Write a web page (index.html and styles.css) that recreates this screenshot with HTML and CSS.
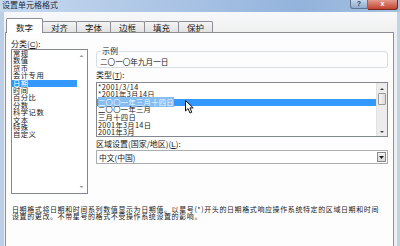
FILE: index.html
```html
<!DOCTYPE html>
<html lang="zh-CN">
  <head>
    <meta charset="UTF-8" />
    <meta name="viewport" content="width=device-width, initial-scale=1.0" />
    <title>设置单元格格式</title>
    <link rel="stylesheet" href="styles.css">
  </head>
  <body>
    <div class="window">
      <div class="titlebar">
        <span class="title">设置单元格格式</span>
        <div class="caption-btns">
          <span class="btn-help">?</span>
          <span class="btn-close">x</span>
        </div>
      </div>

      <div class="client">
        <div class="tabs">
          <span class="tab active">数字</span>
          <span class="tab">对齐</span>
          <span class="tab">字体</span>
          <span class="tab">边框</span>
          <span class="tab">填充</span>
          <span class="tab">保护</span>
        </div>

        <div class="panel">
          <div class="columns">
            <div class="col-left">
              <div class="label">分类(<u>C</u>):</div>
              <div class="listbox category">
                <ul class="items">
                  <li>常规</li>
                  <li>数值</li>
                  <li>货币</li>
                  <li>会计专用</li>
                  <li class="selected">日期</li>
                  <li>时间</li>
                  <li>百分比</li>
                  <li>分数</li>
                  <li>科学记数</li>
                  <li>文本</li>
                  <li>特殊</li>
                  <li>自定义</li>
                </ul>
                <div class="vscroll plain">
                  <svg class="arrow" width="9" height="8" viewBox="0 0 9 8"><polygon points="2.5,5 4.5,3 6.5,5" fill="#9a9a9a"/></svg>
                  <svg class="arrow" width="9" height="8" viewBox="0 0 9 8"><polygon points="2.5,3 4.5,5 6.5,3" fill="#9a9a9a"/></svg>
                </div>
              </div>
            </div>

            <div class="col-right">
              <fieldset class="sample">
                <legend>示例</legend>
                <div class="sample-text">二〇一〇年九月一日</div>
              </fieldset>

              <div class="label gap">类型(<u>T</u>):</div>
              <div class="listbox types">
                <ul class="items">
                  <li>*2001/3/14</li>
                  <li>*2001年3月14日</li>
                  <li class="selected"><span>二〇〇一年三月十四日</span></li>
                  <li>二〇〇一年三月</li>
                  <li>三月十四日</li>
                  <li>2001年3月14日</li>
                  <li>2001年3月</li>
                </ul>
                <div class="vscroll">
                  <svg class="arrow" width="10" height="7" viewBox="0 0 10 7"><polygon points="3,5 5,3 7,5" fill="#404040"/></svg>
                  <div class="thumb"></div>
                  <div class="track"></div>
                  <svg class="arrow" width="10" height="7" viewBox="0 0 10 7"><polygon points="3,3 5,5 7,3" fill="#404040"/></svg>
                </div>
              </div>

              <div class="label gap">区域设置(国家/地区)(<u>L</u>):</div>
              <div class="combo">
                <span>中文(中国)</span>
                <span class="drop">
                  <svg width="7" height="10" viewBox="0 0 7 10"><polygon points="1,4 6,4 3.5,7" fill="#222"/></svg>
                </span>
              </div>
            </div>
          </div>

          <p class="desc">日期格式将日期和时间系列数值显示为日期值。以星号(*)开头的日期格式响应操作系统特定的区域日期和时间<br>设置的更改。不带星号的格式不受操作系统设置的影响。</p>
        </div>
      </div>

      <svg class="cursor" width="10" height="15" viewBox="0 0 10 15">
        <path d="M0.5,0.5 L0.5,11 L3,8.6 L5,13 L6.8,12.2 L4.9,7.9 L8.2,7.9 Z" fill="#fff" stroke="#111" stroke-width="1"/>
      </svg>
    </div>
  </body>
</html>
```

FILE: styles.css
```css
body {
  margin: 0;
  width: 400px;
  height: 246px;
  overflow: hidden;
  font-family: "Noto Sans CJK SC", "Liberation Sans", sans-serif;
  color: #1a1a1a;
}

.window {
  position: relative;
  height: 246px;
  background: linear-gradient(90deg, #bccfe6, #cfdcec 40%, #c2d3e8);
  display: flex;
  flex-direction: column;
}

.titlebar {
  height: 12px;
  display: flex;
  align-items: flex-start;
  background: linear-gradient(90deg, #c7d9ef 0%, #a9c3e4 45%, #93b3dc 75%, #a7c0e0 100%);
}

.title {
  font-size: 8px;
  line-height: 10px;
  padding-left: 2px;
  color: #1e2a3a;
}

.caption-btns {
  margin-left: auto;
  margin-right: 2px;
  display: flex;
}

.btn-help,
.btn-close {
  height: 9px;
  font-size: 7px;
  line-height: 8px;
  text-align: center;
  color: #fff;
  font-weight: bold;
  font-family: "Liberation Sans", sans-serif;
  box-sizing: border-box;
}

.btn-help {
  width: 18px;
  background: linear-gradient(#c5d6ea, #8eaacd);
  border: 1px solid #5e7594;
  border-top: none;
  border-radius: 0 0 0 3px;
  color: #2c3e58;
}

.btn-close {
  width: 30px;
  height: 10px;
  background: linear-gradient(#e29a8c, #c4422e);
  border: 1px solid #6d2c22;
  border-top: none;
  border-left: none;
  border-radius: 0 0 3px 0;
}

.client {
  flex: 1;
  margin: 0 3px 0 4px;
  padding-top: 6px;
  background: linear-gradient(#f7f8fa, #f0f0f0 20px);
  display: flex;
  flex-direction: column;
}

.tabs {
  height: 14px;
  display: flex;
  align-items: flex-end;
  padding-left: 2px;
}

.tab {
  width: 35px;
  height: 11px;
  box-sizing: border-box;
  border: 1px solid #8c8f98;
  border-bottom: none;
  margin-right: -1px;
  background: linear-gradient(#f4f4f4, #e2e2e2);
  font-size: 8.5px;
  line-height: 11px;
  text-align: center;
  border-radius: 2px 2px 0 0;
}

.tab.active {
  position: relative;
  z-index: 1;
  width: 37px;
  height: 15px;
  margin-bottom: -1px;
  line-height: 16px;
  background: #fff;
}

.panel {
  flex: 1;
  margin: 0 3px 0 1px;
  border: 1px solid #8c8f98;
  border-bottom: none;
  background: #fdfdfd;
}

.columns {
  display: flex;
  gap: 8px;
  padding: 6px 0 0 5px;
}

.label {
  font-size: 8px;
  line-height: 9px;
  white-space: nowrap;
}

.label u {
  text-decoration: underline;
  font-family: "Liberation Sans", sans-serif;
}

.listbox {
  display: flex;
  border: 1px solid #828790;
  background: #fff;
  box-sizing: border-box;
}

.items {
  flex: 1;
  margin: 0;
  padding: 0;
  list-style: none;
  white-space: nowrap;
}

.category {
  width: 77px;
  height: 145px;
}

.category .items li {
  height: 7.4px;
  font-size: 7.3px;
  line-height: 7.4px;
  letter-spacing: 0.5px;
  padding-left: 1px;
}

.items li.selected {
  background: #3399ff;
  color: #fff;
}

.vscroll {
  width: 10px;
  display: flex;
  flex-direction: column;
  justify-content: space-between;
  background: #ececec;
  border-left: 1px solid #e2e2e2;
}

.vscroll.plain {
  background: #fff;
  border-left: none;
  padding: 2px 0;
}

.col-right {
  width: 292px;
  padding-top: 8px;
}

.sample {
  margin: 0;
  padding: 3px 3px 1px;
  border: 1px solid #d5dfe5;
  border-radius: 3px;
}

.sample legend {
  padding: 0 1px;
  margin-left: 1px;
  font-size: 8px;
  line-height: 8px;
}

.sample-text {
  font-size: 7.6px;
  line-height: 8px;
}

.label.gap {
  margin-top: 3px;
  line-height: 8px;
}

.types {
  margin-top: 2px;
  height: 55px;
}

.types .items {
  padding-top: 0.6px;
}

.types .items li {
  height: 7.6px;
  font-size: 7.3px;
  line-height: 7.6px;
  letter-spacing: 0.3px;
  padding-left: 1px;
}

.types .items li.selected span {
  background: #86bdf2;
  color: #f2f8ff;
}

.types .vscroll {
  width: 11px;
  justify-content: flex-start;
  padding: 2px 0 1px;
  box-sizing: border-box;
}

.thumb {
  margin: 1px 1px 0;
  height: 10px;
  border: 1px solid #9a9a9a;
  border-radius: 1px;
  background: linear-gradient(90deg, #f4f4f4, #dcdcdc);
}

.track {
  flex: 1;
}

.combo {
  margin-top: 1px;
  height: 14px;
  box-sizing: border-box;
  border: 1px solid #abadb3;
  background: #fff;
  display: flex;
  align-items: center;
  justify-content: space-between;
  padding-left: 2px;
  font-size: 7.8px;
}

.drop {
  width: 9px;
  height: 10px;
  margin-right: 1px;
  box-sizing: border-box;
  border: 1px solid #8a8a8a;
  background: linear-gradient(#f3f3f3, #d8d8d8);
  display: flex;
  align-items: center;
  justify-content: center;
}

.desc {
  margin: 12px 0 0 6px;
  font-size: 7px;
  line-height: 7.2px;
  letter-spacing: 0.6px;
  white-space: nowrap;
}

.cursor {
  position: absolute;
  left: 185px;
  top: 100px;
}
```
